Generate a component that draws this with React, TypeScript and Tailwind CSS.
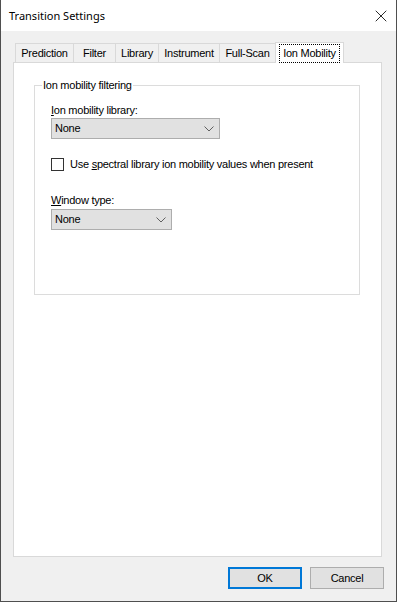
import { X } from 'lucide-react'

const tabs = [
  { name: 'Prediction', w: 'w-[59px]' },
  { name: 'Filter', w: 'w-[43px]' },
  { name: 'Library', w: 'w-[44px]' },
  { name: 'Instrument', w: 'w-[62px]' },
  { name: 'Full-Scan', w: 'w-[57px]' },
]

function Chevron() {
  return (
    <svg width="10" height="6" viewBox="0 0 10 6" className="shrink-0">
      <path d="M0.5 0.5 L5 5 L9.5 0.5" fill="none" stroke="#606060" strokeWidth="1" />
    </svg>
  )
}

function Combo({ width }: { width: string }) {
  return (
    <div
      className={`flex h-[21px] ${width} items-center justify-between border border-[#adadad] bg-[#e1e1e1] pl-[3px] pr-[5px]`}
    >
      <span>None</span>
      <Chevron />
    </div>
  )
}

export default function App() {
  return (
    <div
      className="flex h-[602px] w-[397px] flex-col border-x border-b border-[#4f4f4f] text-[11px] leading-[13px] tracking-[-0.25px] text-black"
      style={{ fontFamily: '"Liberation Sans", Arial, sans-serif' }}
    >
      <div className="flex h-[31px] items-center justify-between bg-white pl-[8px] pr-[5px]">
        <span className="text-[11px] tracking-normal" style={{ fontFamily: '"Noto Sans", sans-serif' }}>
          Transition Settings
        </span>
        <X size={20} strokeWidth={1} color="#000" />
      </div>

      <div className="flex flex-1 flex-col bg-[#f0f0f0] pt-[11px]">
        <div className="ml-[12px] flex items-end pl-[2px]">
          {tabs.map((t, i) => (
            <div
              key={t.name}
              className={`flex h-[19px] ${t.w} items-center justify-center border-x border-t border-[#d9d9d9] bg-[#f0f0f0] pt-[1px] ${i > 0 ? '-ml-px' : ''}`}
            >
              {t.name}
            </div>
          ))}
          <div className="relative z-10 -mb-px -ml-px flex h-[21px] w-[69px] items-start justify-center border-x border-t border-[#d9d9d9] bg-white pt-[1px]">
            <span className="border border-dotted border-black px-[3px] py-[2px]">Ion Mobility</span>
          </div>
        </div>

        <div className="ml-[12px] h-[495px] w-[369px] border border-[#d9d9d9] bg-white">
          <div className="relative ml-[20px] mt-[22px] h-[210px] w-[326px] border border-[#dcdcdc]">
            <span className="absolute -top-[7px] left-[7px] bg-white px-[1px]">Ion mobility filtering</span>
            <div className="flex flex-col pl-[16px] pt-[18px]">
              <span>
                <u className="underline-offset-1">I</u>on mobility library:
              </span>
              <div className="mt-[1px]">
                <Combo width="w-[169px]" />
              </div>
              <div className="mt-[19px] flex items-center gap-[6px]">
                <div className="h-[13px] w-[13px] border border-[#333] bg-white" />
                <span>
                  Use <u className="underline-offset-1">s</u>pectral library ion mobility values when present
                </span>
              </div>
              <span className="mt-[23px]">
                <u className="underline-offset-1">W</u>indow type:
              </span>
              <div className="mt-[2px]">
                <Combo width="w-[121px]" />
              </div>
            </div>
          </div>
        </div>

        <div className="mr-[12px] mt-[10px] flex justify-end gap-[8px]">
          <button className="flex h-[22px] w-[74px] items-center justify-center border-2 border-[#0078d7] bg-[#e1e1e1]">
            OK
          </button>
          <button className="flex h-[22px] w-[74px] items-center justify-center border border-[#adadad] bg-[#e1e1e1]">
            Cancel
          </button>
        </div>
      </div>
    </div>
  )
}
